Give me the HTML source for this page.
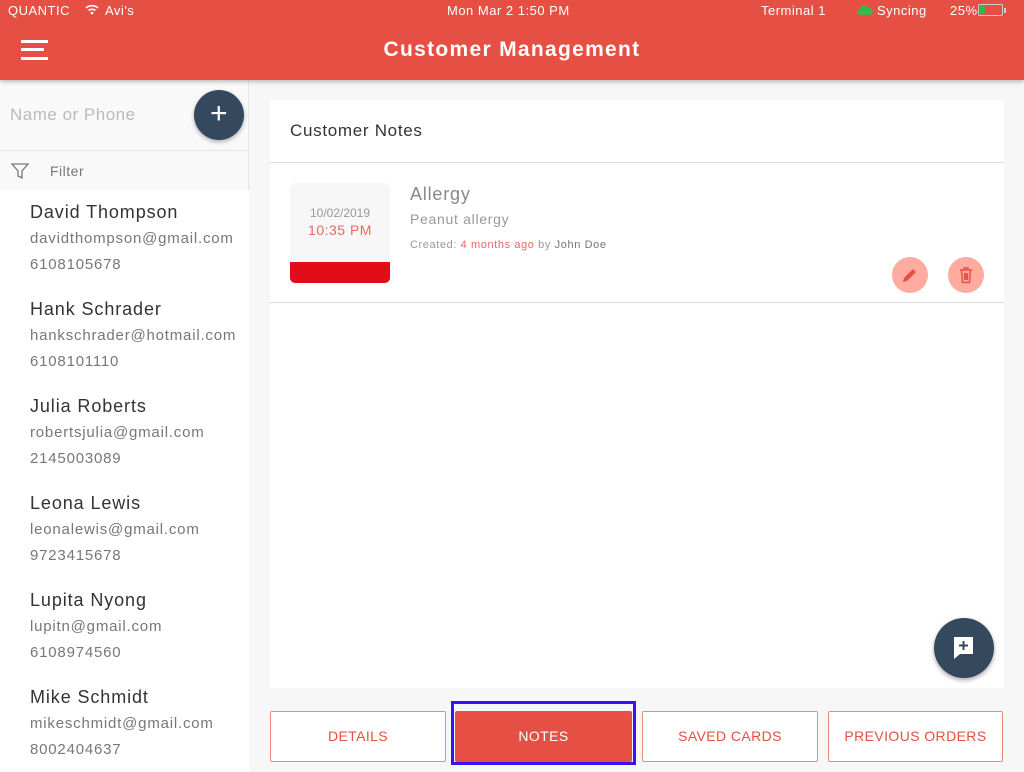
<!DOCTYPE html>
<html><head><style>
*{box-sizing:border-box;margin:0;padding:0}
body{width:1024px;height:768px;overflow:hidden;font-family:"Liberation Sans",sans-serif;background:#f7f7f7;position:relative;letter-spacing:0.5px}
.abs{position:absolute}
.top{left:0;top:0;width:1024px;height:80px;background:#e64f43;color:#fff;box-shadow:0 2px 4px rgba(0,0,0,.25);z-index:2}
.sb{font-size:13px;top:3px}
.side{left:0;top:80px;width:249px;height:688px;background:#f9f9f9;border-right:1px solid #e6e6e6}
.item{position:absolute;left:0;width:249px;height:97px;background:#fff;overflow:hidden;white-space:nowrap}
.item .n{position:absolute;left:30px;top:12px;font-size:18px;color:#333;letter-spacing:0.9px}
.item .e{position:absolute;left:30px;top:40px;font-size:15px;color:#777;letter-spacing:0.8px}
.item .p{position:absolute;left:30px;top:66px;font-size:15px;color:#777;letter-spacing:0.8px}
.btn{position:absolute;top:711px;height:51px;border:1px solid #ea8a83;border-radius:2px;background:#fff;color:#e64f43;font-size:14px;text-align:center;line-height:49px;letter-spacing:0.4px}
</style></head><body>
<div class="abs top">
  <div class="abs sb" style="left:8px">QUANTIC</div>
  <svg class="abs" style="left:85px;top:4px" width="14" height="11" viewBox="0 0 14 11"><path d="M1 4a9 9 0 0 1 12 0M3.5 6.5a5.5 5.5 0 0 1 7 0" stroke="#fff" stroke-width="1.6" fill="none"/><circle cx="7" cy="9" r="1.4" fill="#fff"/></svg>
  <div class="abs sb" style="left:105px">Avi's</div>
  <div class="abs sb" style="left:447px">Mon Mar 2 1:50 PM</div>
  <div class="abs sb" style="left:761px">Terminal 1</div>
  <svg class="abs" style="left:857px;top:5px" width="16" height="10" viewBox="0 0 16 10"><path d="M3 10a3 3 0 0 1 0-6 4 4 0 0 1 8-1 3.5 3.5 0 0 1 2 7z" fill="#3cb54a"/></svg>
  <div class="abs sb" style="left:877px">Syncing</div>
  <div class="abs sb" style="left:950px">25%</div>
  <div class="abs" style="left:978px;top:4px;width:25px;height:12px;border:1px solid #ccc;border-radius:2px"><div style="margin:1px;width:5px;height:8px;background:#3cb54a"></div></div>
  <div class="abs" style="left:1004px;top:8px;width:2px;height:5px;background:#ccc"></div>
  <div class="abs" style="left:21px;top:40px;width:27px;height:3px;background:#fff"></div>
  <div class="abs" style="left:21px;top:48px;width:23px;height:3px;background:#fff"></div>
  <div class="abs" style="left:21px;top:57px;width:27px;height:3px;background:#fff"></div>
  <div class="abs" style="left:0;width:1024px;top:38px;text-align:center;font-size:21px;font-weight:bold;letter-spacing:1.3px">Customer Management</div>
</div>
<div class="abs side">
  <div class="abs" style="left:10px;top:25px;font-size:17px;color:#bbb">Name or Phone</div>
  <div class="abs" style="left:194px;top:10px;width:50px;height:50px;border-radius:50%;background:#34495e;box-shadow:0 2px 4px rgba(0,0,0,.3);color:#fff;font-size:30px;text-align:center;line-height:48px">+</div>
  <div class="abs" style="left:0;top:70px;width:249px;height:1px;background:#e3e3e3"></div>
  <svg class="abs" style="left:11px;top:83px" width="18" height="17" viewBox="0 0 18 17"><path d="M1 1h16l-6 7v7l-4-2v-5z" fill="none" stroke="#777" stroke-width="1.3"/></svg>
  <div class="abs" style="left:50px;top:83px;font-size:14px;color:#777">Filter</div>
</div>
<div class="item" style="top:190px"><div class="n">David Thompson</div><div class="e">davidthompson@gmail.com</div><div class="p">6108105678</div></div>
<div class="item" style="top:287px"><div class="n">Hank Schrader</div><div class="e">hankschrader@hotmail.com</div><div class="p">6108101110</div></div>
<div class="item" style="top:384px"><div class="n">Julia Roberts</div><div class="e">robertsjulia@gmail.com</div><div class="p">2145003089</div></div>
<div class="item" style="top:481px"><div class="n">Leona Lewis</div><div class="e">leonalewis@gmail.com</div><div class="p">9723415678</div></div>
<div class="item" style="top:578px"><div class="n">Lupita Nyong</div><div class="e">lupitn@gmail.com</div><div class="p">6108974560</div></div>
<div class="item" style="top:675px"><div class="n">Mike Schmidt</div><div class="e">mikeschmidt@gmail.com</div><div class="p">8002404637</div></div>

<div class="abs" style="left:270px;top:100px;width:734px;height:588px;background:#fff">
  <div class="abs" style="left:20px;top:21px;font-size:17px;color:#333;letter-spacing:0.7px">Customer Notes</div>
  <div class="abs" style="left:0;top:62px;width:734px;height:1px;background:#ddd"></div>
  <div class="abs" style="left:20px;top:83px;width:100px;height:100px;border-radius:5px;background:#f7f7f7;overflow:hidden">
    <div class="abs" style="left:0;width:100px;top:23px;text-align:center;font-size:12px;color:#999;letter-spacing:0">10/02/2019</div>
    <div class="abs" style="left:0;width:100px;top:39px;text-align:center;font-size:14px;color:#e9685f">10:35 PM</div>
    <div class="abs" style="left:0;top:79px;width:100px;height:21px;background:#e20d18"></div>
  </div>
  <div class="abs" style="left:140px;top:84px;font-size:18px;color:#888;letter-spacing:0.8px">Allergy</div>
  <div class="abs" style="left:140px;top:111px;font-size:14px;color:#999;letter-spacing:0.7px">Peanut allergy</div>
  <div class="abs" style="left:140px;top:139px;font-size:11px;color:#999;letter-spacing:0.6px">Created: <span style="color:#e9685f">4 months ago</span> by <span style="color:#777">John Doe</span></div>
  <div class="abs" style="left:622px;top:157px;width:36px;height:36px;border-radius:50%;background:#ffab9f"></div>
  <svg class="abs" style="left:631px;top:166px" width="18" height="18" viewBox="0 0 18 18"><path d="M2 16l1-4 9-9 3 3-9 9z" fill="#e64f43"/></svg>
  <div class="abs" style="left:678px;top:157px;width:36px;height:36px;border-radius:50%;background:#ffab9f"></div>
  <svg class="abs" style="left:687px;top:166px" width="18" height="18" viewBox="0 0 18 18"><path d="M3 4h12M7 4V2h4v2M4.5 4.5l1 12h7l1-12M7.5 7v7M9 7v7M10.5 7v7" stroke="#e64f43" stroke-width="1.4" fill="none"/></svg>
  <div class="abs" style="left:0;top:202px;width:734px;height:1px;background:#ddd"></div>
</div>
<div class="abs" style="left:934px;top:618px;width:60px;height:60px;border-radius:50%;background:#34495e;box-shadow:0 2px 5px rgba(0,0,0,.35)"></div>
<svg class="abs" style="left:951px;top:634px" width="26" height="26" viewBox="0 0 26 26"><path d="M3 3h19v17H9l-6 5z" fill="#fff"/><path d="M12.5 7v9M8 11.5h9" stroke="#34495e" stroke-width="2"/></svg>

<div class="btn" style="left:270px;width:176px">DETAILS</div>
<div class="btn" style="left:455px;width:177px;background:#e64f43;color:#fff;border-color:#e64f43">NOTES</div>
<div class="abs" style="left:451px;top:701px;width:185px;height:64px;border:3px solid #3a10f5"></div>
<div class="btn" style="left:642px;width:176px">SAVED CARDS</div>
<div class="btn" style="left:828px;width:175px">PREVIOUS ORDERS</div>
</body></html>
